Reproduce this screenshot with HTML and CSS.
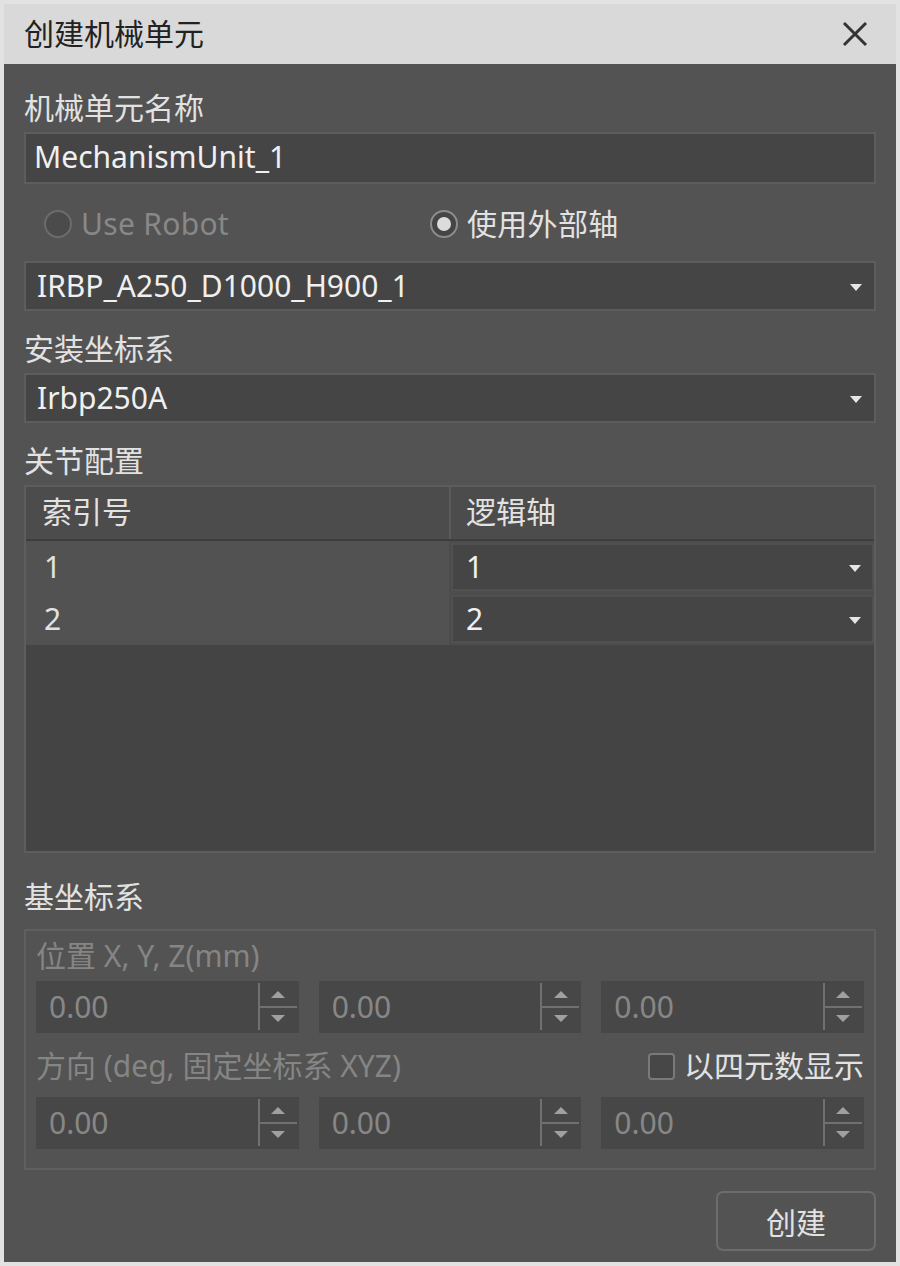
FILE: index.html
```html
<!DOCTYPE html>
<html lang="zh-CN">
<head>
    <meta charset="UTF-8">
    <title>创建机械单元</title>
    <link rel="stylesheet" href="styles.css">
</head>
<body>
    <div class="dialog">
        <div class="titlebar">
            <span class="title">创建机械单元</span>
            <svg class="close" width="26" height="26" viewBox="0 0 26 26">
                <path d="M2 2 L24 24 M24 2 L2 24" stroke="#333" stroke-width="3" fill="none"/>
            </svg>
        </div>

        <div class="content">
            <div class="field-label first">机械单元名称</div>
            <div class="line-edit">MechanismUnit_1</div>

            <div class="radio-row">
                <label class="radio disabled"><span class="radio-mark"></span>Use Robot</label>
                <label class="radio checked"><span class="radio-mark"></span>使用外部轴</label>
            </div>

            <div class="combo">IRBP_A250_D1000_H900_1<span class="arrow"></span></div>

            <div class="field-label">安装坐标系</div>
            <div class="combo">Irbp250A<span class="arrow"></span></div>

            <div class="field-label">关节配置</div>
            <div class="table">
                <div class="table-head">
                    <div class="th first-col">索引号</div>
                    <div class="th">逻辑轴</div>
                </div>
                <div class="table-row">
                    <div class="td first-col">1</div>
                    <div class="td-combo"><div class="combo small">1<span class="arrow"></span></div></div>
                </div>
                <div class="table-row">
                    <div class="td first-col">2</div>
                    <div class="td-combo"><div class="combo small">2<span class="arrow"></span></div></div>
                </div>
                <div class="table-empty"></div>
            </div>

            <div class="field-label base">基坐标系</div>
            <div class="group">
                <div class="group-label">位置 X, Y, Z(mm)</div>
                <div class="spin-row">
                    <div class="spin">0.00<span class="spin-btns"><i class="up"></i><i class="down"></i></span></div>
                    <div class="spin">0.00<span class="spin-btns"><i class="up"></i><i class="down"></i></span></div>
                    <div class="spin">0.00<span class="spin-btns"><i class="up"></i><i class="down"></i></span></div>
                </div>
                <div class="group-label second">
                    <span>方向 (deg, 固定坐标系 XYZ)</span>
                    <label class="checkbox"><span class="check-mark"></span>以四元数显示</label>
                </div>
                <div class="spin-row second">
                    <div class="spin">0.00<span class="spin-btns"><i class="up"></i><i class="down"></i></span></div>
                    <div class="spin">0.00<span class="spin-btns"><i class="up"></i><i class="down"></i></span></div>
                    <div class="spin">0.00<span class="spin-btns"><i class="up"></i><i class="down"></i></span></div>
                </div>
            </div>

            <div class="actions">
                <button class="btn">创建</button>
            </div>
        </div>
    </div>
</body>
</html>
```

FILE: styles.css
```css
* {
    box-sizing: border-box;
}
body {
    margin: 0;
    background: #e2e2e2;
    font-family: "Noto Sans", "Noto Sans CJK SC", sans-serif;
    font-size: 30px;
    color: #e2e2e2;
}
.dialog {
    margin: 4px;
    height: 1258px;
    background: #535353;
}
.titlebar {
    height: 60px;
    background: #d9d9d9;
    display: flex;
    align-items: center;
    justify-content: space-between;
    padding: 0 28px 0 20px;
    color: #222;
}
.title {
    line-height: 40px;
}
.close {
    display: block;
}
.content {
    padding: 0 20px;
    display: flex;
    flex-direction: column;
}
.field-label {
    line-height: 40px;
    height: 40px;
    margin-top: 18px;
    margin-bottom: 4px;
}
.field-label.first {
    margin-top: 24px;
}
.field-label.base {
    margin-top: 24px;
    margin-bottom: 12px;
}
.line-edit {
    height: 52px;
    background: #454545;
    border: 2px solid #5d5d5d;
    padding-left: 8px;
    line-height: 46px;
    color: #f0f0f0;
}
.radio-row {
    display: grid;
    grid-template-columns: 386px 1fr;
    padding-left: 20px;
    height: 40px;
    margin: 20px 0 17px;
}
.radio {
    display: flex;
    align-items: center;
    gap: 9px;
    line-height: 40px;
    letter-spacing: 0.3px;
}
.radio.disabled {
    color: #888;
}
.radio-mark {
    flex-shrink: 0;
    width: 28px;
    height: 28px;
    border-radius: 50%;
    border: 2px solid #6c6c6c;
    background: #4b4b4b;
    position: relative;
}
.radio.checked .radio-mark {
    border-color: #8c8c8c;
    background: #454545;
}
.radio.checked .radio-mark::after {
    content: "";
    position: absolute;
    left: 5px;
    top: 5px;
    width: 14px;
    height: 14px;
    border-radius: 50%;
    background: #dcdcdc;
}
.combo {
    height: 50px;
    background: #454545;
    border: 2px solid #5d5d5d;
    padding-left: 11px;
    line-height: 45px;
    color: #f0f0f0;
    position: relative;
}
.combo .arrow {
    position: absolute;
    right: 12px;
    top: 21px;
    width: 0;
    height: 0;
    border-left: 6px solid transparent;
    border-right: 6px solid transparent;
    border-top: 7px solid #e6e6e6;
}
.combo.small {
    height: 48px;
    line-height: 43px;
    padding-left: 13px;
    border-color: #505050;
}
.combo.small .arrow {
    right: 11px;
    top: 20px;
}
.table {
    height: 368px;
    border: 2px solid #5d5d5d;
    display: flex;
    flex-direction: column;
    background: #444;
}
.table-head {
    display: grid;
    grid-template-columns: 425px 1fr;
    height: 54px;
    background: #4c4c4c;
    border-bottom: 2px solid #3d3d3d;
}
.th {
    line-height: 50px;
    padding-left: 15px;
}
.th.first-col {
    padding-left: 16px;
    border-right: 2px solid #5a5a5a;
}
.table-row {
    display: grid;
    grid-template-columns: 425px 1fr;
    height: 52px;
    background: #4d4d4d;
}
.td {
    background: #525252;
    border-right: 2px solid #4c4c4c;
    padding-left: 18px;
    line-height: 52px;
}
.td-combo {
    padding: 2px 0 2px 0;
}
.table-empty {
    flex: 1;
}
.group {
    height: 241px;
    border: 2px solid #5f5f5f;
    padding: 5px 10px 0;
}
.group-label {
    height: 40px;
    line-height: 40px;
    color: #858585;
    display: flex;
    justify-content: space-between;
    align-items: center;
}
.group-label.second {
    margin-top: 13px;
}
.spin-row {
    display: grid;
    grid-template-columns: 1fr 1fr 1fr;
    gap: 20px;
    margin-top: 5px;
}
.spin-row.second {
    margin-top: 11px;
}
.spin {
    height: 52px;
    background: #474747;
    padding-left: 13px;
    line-height: 52px;
    color: #878787;
    position: relative;
}
.spin-btns {
    position: absolute;
    right: 2px;
    top: 2px;
    bottom: 3px;
    width: 39px;
    border-left: 2px solid #707070;
    display: flex;
    flex-direction: column;
}
.spin-btns i {
    flex: 1;
    display: flex;
    align-items: center;
    justify-content: center;
}
.spin-btns .up {
    border-bottom: 2px solid #707070;
}
.spin-btns .up::after,
.spin-btns .down::after {
    content: "";
    width: 0;
    height: 0;
    border-left: 7px solid transparent;
    border-right: 7px solid transparent;
}
.spin-btns .up::after {
    border-bottom: 7px solid #a0a0a0;
}
.spin-btns .down::after {
    border-top: 7px solid #a0a0a0;
}
.checkbox {
    display: flex;
    align-items: center;
    gap: 9px;
    color: #e2e2e2;
}
.check-mark {
    flex-shrink: 0;
    width: 27px;
    height: 27px;
    border: 2px solid #7a7a7a;
    border-radius: 4px;
    background: #474747;
}
.actions {
    display: flex;
    justify-content: flex-end;
    margin-top: 21px;
}
.btn {
    width: 160px;
    height: 60px;
    border: 2px solid #6c6c6c;
    border-radius: 7px;
    background: #535353;
    font: inherit;
    color: #e2e2e2;
    padding: 0;
}
```
